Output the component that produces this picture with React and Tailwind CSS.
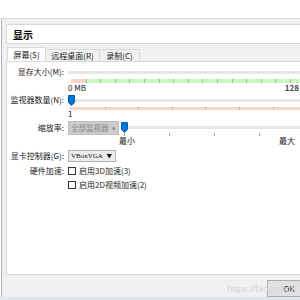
const ticks = (n) => Array.from({ length: n }, (_, i) => i);

function Thumb() {
  return (
    <svg width="7" height="11" viewBox="0 0 7 11" className="shrink-0">
      <path d="M0.5 0.5H6.5V7.5L3.5 10.5L0.5 7.5Z" fill="#0078d7" stroke="#005fb0" strokeWidth="1" />
    </svg>
  );
}

function Label({ children, h = 'h-[12px]' }) {
  return (
    <div className={`w-[57px] shrink-0 ${h} flex items-center justify-end text-[8px] text-[#1a1a1a] whitespace-nowrap`}>
      {children}
    </div>
  );
}

function Checkbox({ label }) {
  return (
    <div className="flex items-center h-[9px]">
      <div className="w-[8px] h-[8px] border border-[#333] bg-white" />
      <span className="ml-[3px] text-[8px] text-[#1a1a1a] whitespace-nowrap">{label}</span>
    </div>
  );
}

export default function App() {
  return (
    <div className="relative w-[300px] h-[300px] overflow-hidden bg-white font-['Noto_Sans_CJK_SC','Noto_Sans',sans-serif]">
      <div className="h-[18px] bg-white" />
      <div className="h-[279px] bg-[#f0f0f0] border-t border-[#dcdcdc] border-l border-l-[#b4b4b4] ml-[1px] pl-[4px] pt-[5px]">
        {/* Header */}
        <div className="w-[300px] h-[20px] bg-white border border-[#d9d9d9] flex items-center pl-[6px]">
          <span className="text-[10px] font-bold text-black">显示</span>
        </div>

        {/* Tabs */}
        <div className="h-[17px] flex items-end pl-[1px]">
          <div className="h-[14px] w-[39px] bg-white border border-b-0 border-[#d9d9d9] flex items-center justify-center text-[8px] text-[#1a1a1a]">
            屏幕(S)
          </div>
          <div className="h-[12px] w-[54px] border-t border-r border-[#d9d9d9] flex items-center justify-center text-[8px] text-[#1a1a1a]">
            远程桌面(R)
          </div>
          <div className="h-[12px] w-[40px] border-t border-r border-[#d9d9d9] flex items-center justify-center text-[8px] text-[#1a1a1a]">
            录制(C)
          </div>
        </div>

        {/* Content panel */}
        <div className="w-[300px] h-[214px] bg-white border border-[#d9d9d9] pt-[4px]">
          {/* 显存大小 */}
          <div className="flex">
            <Label>显存大小(M):</Label>
            <div className="ml-[4px] flex-1">
              <div className="h-[12px] flex items-center">
                <div className="h-[3px] w-full bg-[#e7e7e7]" />
              </div>
              <div className="mt-[1px] ml-[3px] h-[4px] flex pl-[14.6px] gap-[13.6px] bg-[linear-gradient(to_right,#fdd5c4_16px,#c9f8c3_16px)]">
                {ticks(15).map((i) => (
                  <div key={i} className="w-px h-full bg-[#9fbf9b]" />
                ))}
              </div>
              <div className="h-[9px] w-[231px] flex items-center justify-between text-[8px] text-[#222]">
                <span>0 MB</span>
                <span className="font-bold text-[#444]">128</span>
              </div>
            </div>
          </div>

          {/* 监视器数量 */}
          <div className="flex mt-[2px]">
            <Label>监视器数量(N):</Label>
            <div className="ml-[4px] flex-1">
              <div className="h-[12px] flex items-center">
                <Thumb />
                <div className="h-[3px] flex-1 bg-[#e7e7e7]" />
              </div>
              <div className="mt-[1px] ml-[2px] h-[3px] flex pl-[34.6px] gap-[32.6px] bg-[#fdd5c4]">
                {ticks(7).map((i) => (
                  <div key={i} className="w-px h-full bg-[#d2aa9a]" />
                ))}
              </div>
              <div className="h-[8px] flex items-center text-[8px] text-[#222]">1</div>
            </div>
          </div>

          {/* 缩放率 */}
          <div className="flex mt-[3px]">
            <Label h="h-[14px]">缩放率:</Label>
            <div className="ml-[4px] w-[54px] h-[14px] bg-[#cccccc] border border-[#bfbfbf] flex items-center justify-between px-[2px] text-[7.5px] text-[#8a8a8a] whitespace-nowrap">
              <span>全部监视器</span>
              <span className="text-[7px]">▾</span>
            </div>
            <div className="ml-[2px] flex-1">
              <div className="h-[12px] flex items-center">
                <Thumb />
                <div className="h-[3px] flex-1 bg-[#e7e7e7]" />
              </div>
              <div className="h-[3px] flex pl-[3px] gap-[44px]">
                {ticks(5).map((i) => (
                  <div key={i} className="w-px h-full bg-[#a0a0a0]" />
                ))}
              </div>
              <div className="-ml-[2px] w-[176px] h-[10px] flex items-center justify-between text-[8px] text-[#1a1a1a]">
                <span>最小</span>
                <span>最大</span>
              </div>
            </div>
          </div>

          {/* 显卡控制器 */}
          <div className="flex mt-[4px]">
            <Label>显卡控制器(G):</Label>
            <div className="ml-[4px] w-[48px] h-[12px] bg-[#ececec] border border-[#b4b4b4] flex items-center justify-between pl-[2px] pr-[3px] whitespace-nowrap">
              <span className="text-[7px] text-[#111] font-['Liberation_Serif',serif]">VBoxVGA</span>
              <span className="text-[5.5px] text-[#111]">▼</span>
            </div>
          </div>

          {/* 硬件加速 */}
          <div className="flex mt-[4px]">
            <Label h="h-[9px]">硬件加速:</Label>
            <div className="ml-[4px]">
              <Checkbox label="启用3D加速(3)" />
              <div className="mt-[5px]">
                <Checkbox label="启用2D视频加速(2)" />
              </div>
            </div>
          </div>
        </div>

        {/* Bottom bar */}
        <div className="h-[22px] flex items-end justify-end">
          <div className="w-[44px] h-[17px] -mr-[11px] bg-[#e1e1e1] border border-[#adadad] flex items-center justify-center text-[8px] text-[#222]">
            OK
          </div>
        </div>
      </div>
      <div className="h-[3px] bg-[#dfe6ee]" />
      <span className="absolute left-[227px] top-[282px] text-[9.5px] text-[#d6d6d6] font-['Liberation_Sans',sans-serif]">
        https://blog.csdn
      </span>
    </div>
  );
}
